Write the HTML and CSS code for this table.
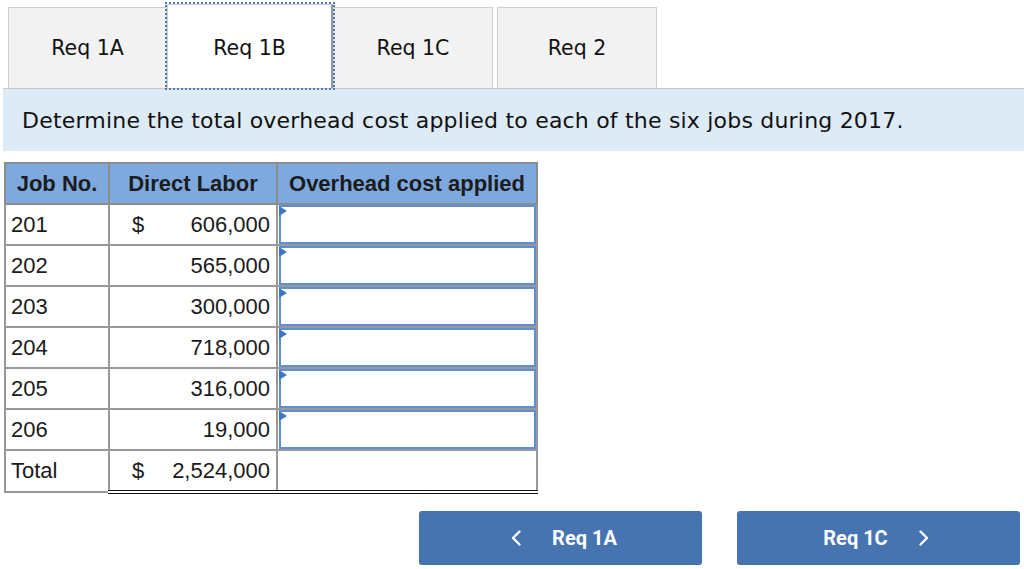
FILE: index.html
```html
<!DOCTYPE html>
<html>
<head>
<meta charset="utf-8">
<link rel="stylesheet" href="styles.css">
</head>
<body>
<div class="tabs">
  <div class="tab t1">Req 1A</div>
  <div class="tab active">Req 1B</div>
  <div class="tab t3">Req 1C</div>
  <div class="tab t4">Req 2</div>
</div>
<div class="band">Determine the total overhead cost applied to each of the six jobs during 2017.</div>
<table class="grid">
  <thead>
    <tr><th class="c1">Job No.</th><th class="c2">Direct Labor</th><th class="c3">Overhead cost applied</th></tr>
  </thead>
  <tbody>
    <tr><td>201</td><td class="num"><span class="cur">$</span>606,000</td><td class="in"><div class="box"></div></td></tr>
    <tr><td>202</td><td class="num">565,000</td><td class="in"><div class="box"></div></td></tr>
    <tr><td>203</td><td class="num">300,000</td><td class="in"><div class="box"></div></td></tr>
    <tr><td>204</td><td class="num">718,000</td><td class="in"><div class="box"></div></td></tr>
    <tr><td>205</td><td class="num">316,000</td><td class="in"><div class="box"></div></td></tr>
    <tr><td>206</td><td class="num">19,000</td><td class="in"><div class="box"></div></td></tr>
    <tr class="total"><td>Total</td><td class="num"><span class="cur">$</span>2,524,000</td><td></td></tr>
  </tbody>
</table>
<div class="nav">
  <div class="btn prev">
    <svg class="chev" width="12" height="16" viewBox="0 0 12 16"><path d="M9.5 1.5 L3 8 L9.5 14.5" fill="none" stroke="#fff" stroke-width="2.4" stroke-linecap="round" stroke-linejoin="round"/></svg>
    <span>Req 1A</span>
  </div>
  <div class="btn next">
    <span>Req 1C</span>
    <svg class="chev" width="12" height="16" viewBox="0 0 12 16"><path d="M2.5 1.5 L9 8 L2.5 14.5" fill="none" stroke="#fff" stroke-width="2.4" stroke-linecap="round" stroke-linejoin="round"/></svg>
  </div>
</div>
</body>
</html>
```
FILE: styles.css
```css
html, body { margin: 0; padding: 0; background: #fff; }
body { width: 1024px; height: 569px; overflow: hidden; }

.tabs {
  display: flex;
  padding: 7px 0 0 5px;
  margin-left: 3px;
  border-bottom: 1px solid #c8c8c8;
  height: 81px;
}
.tab {
  box-sizing: border-box;
  height: 81px;
  background: #f2f2f2;
  border: 1px solid #cfcfcf;
  border-bottom: none;
  display: flex;
  align-items: center;
  justify-content: center;
  font-family: "DejaVu Sans", Verdana, sans-serif;
  font-size: 20.5px;
  color: #111;
}
.tab.t1 { width: 159px; }
.tab.t3 { width: 160px; }
.tab.t4 { width: 160px; margin-left: 4px; }
.tab.active {
  width: 166px;
  background: #fff;
  border-right: 2px solid #999;
  outline: 2px dotted #4a79c0;
  height: 84px;
  margin-top: -3px;
  padding-top: 3px;
  position: relative;
  z-index: 1;
}

.band {
  margin-left: 3px;
  height: 62px;
  background: #ddebf7;
  display: flex;
  align-items: center;
  padding-left: 19px;
  font-family: "DejaVu Sans", Verdana, sans-serif;
  font-size: 22px;
  letter-spacing: 0.2px;
  color: #111;
}

.grid {
  margin: 11px 0 0 4px;
  border-collapse: collapse;
  font-family: "Liberation Sans", Arial, sans-serif;
  font-size: 22px;
  color: #1a1a1a;
  border: 2px solid #999;
}
.grid th {
  background: #7ea9df;
  font-weight: bold;
  height: 39px;
  padding: 0;
  border: 2px solid #8c8c8c;
  white-space: nowrap;
  color: #1c1c1c;
}
.grid th.c1 { width: 102px; }
.grid th.c2 { width: 166px; }
.grid th.c3 { width: 258px; }
.grid td {
  height: 39px;
  border: 2px solid #999;
  padding: 0 5px;
  background: #fff;
  white-space: nowrap;
}
.grid td.num { text-align: right; padding: 0 6px 0 22px; }
.grid td .cur { float: left; }
.grid td.in { padding: 0; position: relative; }
.box {
  box-sizing: border-box;
  height: 39px;
  border: 2px solid #5e8fd4;
  margin: 0 0 0 1px;
}
.grid td.in::before {
  content: "";
  position: absolute;
  left: 1px;
  top: 1px;
  border-top: 5px solid transparent;
  border-bottom: 5px solid transparent;
  border-left: 8px solid #3d76c9;
}
.grid tr.total td:nth-child(2),
.grid tr.total td:nth-child(3) {
  border-top: 2px solid #111;
  border-bottom: 4px double #111;
}

.nav {
  display: flex;
  gap: 35px;
  padding: 17px 0 0 419px;
}
.btn {
  box-sizing: border-box;
  width: 283px;
  height: 54px;
  background: #4574b1;
  border-radius: 3px;
  display: flex;
  align-items: center;
  justify-content: center;
  gap: 30px;
  color: #fff;
  font-family: Roboto, "Liberation Sans", sans-serif;
  font-weight: bold;
  font-size: 20px;
}
.btn.prev { padding-left: 6px; }
.btn.next { padding-right: 4px; }
.chev { display: block; }
```
